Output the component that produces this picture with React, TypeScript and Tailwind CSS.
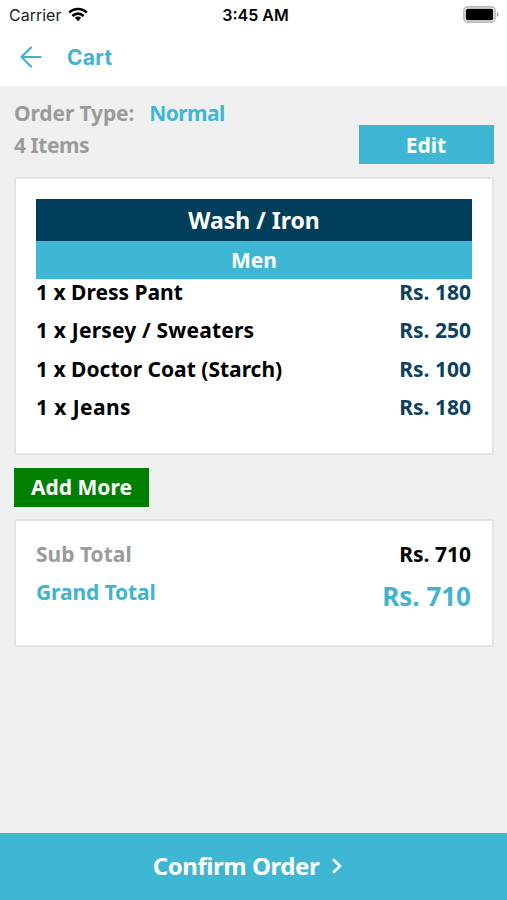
import React from 'react';

interface CartItem {
  name: string;
  price: string;
  tracking: string;
}

const ITEMS: CartItem[] = [
  { name: 'Dress Pant', price: 'Rs. 180', tracking: 'tracking-normal' },
  { name: 'Jersey / Sweaters', price: 'Rs. 250', tracking: 'tracking-[0.18px]' },
  { name: 'Doctor Coat (Starch)', price: 'Rs. 100', tracking: 'tracking-normal' },
  { name: 'Jeans', price: 'Rs. 180', tracking: 'tracking-[0.4px]' },
];

const StatusBar: React.FC = () => (
  <div className="grid grid-cols-3 items-center h-[30px] pl-[9px] pr-[8px] font-['Inter',sans-serif] text-black">
    <div className="flex items-center gap-[7px]">
      <span className="text-[16px] font-normal text-[#222]">Carrier</span>
      <svg className="-mt-[2px]" width="20" height="15" viewBox="0 0 20 15" fill="none" stroke="#000" strokeWidth="2.7">
        <path d="M1.2 5.6a12.6 12.6 0 0 1 17.6 0" />
        <path d="M4.4 9a8 8 0 0 1 11.2 0" />
        <path d="M10 14.2l-3.2-3.4a4.6 4.6 0 0 1 6.4 0z" fill="#000" stroke="none" />
      </svg>
    </div>
    <span className="pl-[3px] text-center text-[16px] font-semibold whitespace-nowrap">3:45 AM</span>
    <svg className="justify-self-end -mt-[1px]" width="36" height="17" viewBox="0 0 36 17">
      <rect x="0.9" y="0.9" width="31.2" height="15.2" rx="4" fill="#fff" stroke="#b9b9b9" strokeWidth="1.6" />
      <rect x="2.8" y="2.8" width="27.4" height="11.4" rx="1.8" fill="#000" />
      <path d="M33.8 6.2c2.2.8 2.2 3.8 0 4.6z" fill="#999" />
    </svg>
  </div>
);

const Header: React.FC = () => (
  <header className="flex items-center h-[56px] pl-[20px] pb-[2px] text-[#42b3cf]">
    <svg width="22" height="22" viewBox="0 0 22 22" fill="none" stroke="currentColor" strokeWidth="2.2" strokeLinecap="round" strokeLinejoin="round">
      <path d="M20.5 11H1.5M11 1.5L1.5 11l9.5 9.5" />
    </svg>
    <h1 className="ml-[25px] pt-[2px] font-['Inter',sans-serif] text-[21px] font-bold tracking-[0.3px]">Cart</h1>
  </header>
);

const App: React.FC = () => {
  return (
    <div className="flex flex-col w-full h-screen overflow-hidden bg-white font-['Noto_Sans',sans-serif] font-bold text-[21px] leading-[24px]">
      <StatusBar />
      <Header />

      <main className="flex-1 bg-[#f0f0f0] pl-[14px] pr-[13px] pt-[15px]">
        <div className="flex gap-[15px] text-[#9b9b9b]">
          <span className="tracking-[-0.12px]">Order Type:</span>
          <span className="text-[#3db7d3] tracking-[-0.6px]">Normal</span>
        </div>
        <div className="flex items-center justify-between text-[#9b9b9b]">
          <span className="tracking-[-0.45px]">4 Items</span>
          <button className="w-[135px] h-[39px] pr-[1px] bg-[#3db7d3] text-white">Edit</button>
        </div>

        <section className="mt-[13px] h-[278px] bg-white border-2 border-[#e3e4e6] rounded-[3px] px-[20px] pt-[20px]">
          <div className="h-[42px] leading-[42px] bg-[#003f5c] text-white text-center text-[23px]">Wash / Iron</div>
          <div className="h-[38px] leading-[38px] bg-[#3db7d3] text-white text-center">Men</div>
          <ul className="flex flex-col gap-[14.4px] pt-[1px]">
            {ITEMS.map((item) => (
              <li key={item.name} className="flex justify-between pr-[1px]">
                <span className={`text-black ${item.tracking}`}>1 x {item.name}</span>
                <span className="text-[#0b4260]">{item.price}</span>
              </li>
            ))}
          </ul>
        </section>

        <button className="block mt-[13px] w-[135px] h-[39px] pb-[1px] bg-[#008000] text-white">Add More</button>

        <section className="mt-[12px] h-[128px] bg-white border-2 border-[#e3e4e6] rounded-[3px] pl-[20px] pr-[21px] pt-[21px]">
          <div className="flex justify-between">
            <span className="text-[#9b9b9b]">Sub Total</span>
            <span className="text-black">Rs. 710</span>
          </div>
          <div className="flex justify-between mt-[14px] text-[#42b3cf]">
            <span className="tracking-[-0.1px]">Grand Total</span>
            <span className="pt-[1px] text-[26px] leading-[30px]">Rs. 710</span>
          </div>
        </section>
      </main>

      <button className="flex items-center justify-center h-[67px] pr-[11px] pb-[1px] bg-[#3db7d3] text-white text-[24px]">
        <span className="tracking-[-0.45px]">Confirm Order</span>
        <svg className="ml-[12px]" width="12" height="16" viewBox="0 0 12 16" fill="none" stroke="currentColor" strokeWidth="2.6">
          <path d="M2 1.2L9 8l-7 6.8" />
        </svg>
      </button>
    </div>
  );
};

export default App;
